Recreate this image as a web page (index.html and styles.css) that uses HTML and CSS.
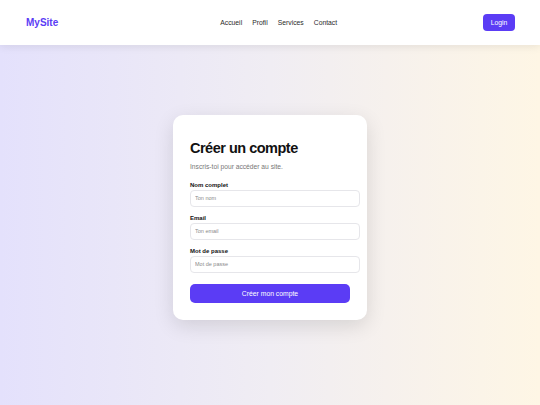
FILE: index.html
```html
<!DOCTYPE html>
<html lang="fr">
<head>
<meta charset="utf-8">
<title>MySite</title>
<link rel="stylesheet" href="styles.css">
</head>
<body>
<header class="topbar">
  <a class="logo" href="#">MySite</a>
  <nav class="nav">
    <a href="#">Accueil</a>
    <a href="#">Profil</a>
    <a href="#">Services</a>
    <a href="#">Contact</a>
  </nav>
  <button class="login">Login</button>
</header>
<main class="main">
  <form class="card">
    <h1 class="title">Créer un compte</h1>
    <p class="subtitle">Inscris-toi pour accéder au site.</p>
    <label class="label">Nom complet</label>
    <input class="field" type="text" placeholder="Ton nom">
    <label class="label">Email</label>
    <input class="field" type="email" placeholder="Ton email">
    <label class="label">Mot de passe</label>
    <input class="field" type="password" placeholder="Mot de passe">
    <button class="submit" type="button">Créer mon compte</button>
  </form>
</main>
</body>
</html>
```
FILE: styles.css
```css
* { margin: 0; }
html, body { height: 100%; }
body {
  font-family: "Liberation Sans", Arial, sans-serif;
  background: linear-gradient(to right, #e4e1fc 0%, #f0edf3 50%, #fef6e5 100%);
  color: #111;
}
.topbar {
  height: 45px;
  background: #fff;
  box-shadow: 0 2px 8px rgba(0,0,0,0.08);
  display: flex;
  align-items: center;
  padding: 0 25px 0 26px;
  box-sizing: border-box;
  position: relative;
}
.logo {
  font-size: 10px;
  font-weight: 700;
  color: #5b3cf5;
  text-decoration: none;
}
.nav {
  display: flex;
  gap: 10px;
  margin-left: 162px;
}
.nav a {
  font-size: 6.8px;
  color: #2a2a2a;
  text-decoration: none;
}
.login {
  margin-left: auto;
  background: #5b3cf5;
  color: #fff;
  border: none;
  border-radius: 4px;
  font-family: inherit;
  font-size: 6.8px;
  height: 16.5px;
  width: 32px;
  padding: 0;
}
.main {
  display: flex;
  justify-content: center;
  padding-top: 70px;
}
.card {
  width: 160px;
  padding: 17px;
  background: #fff;
  border-radius: 10px;
  box-shadow: 0 6px 20px rgba(0,0,0,0.12);
  display: flex;
  flex-direction: column;
}
.title {
  font-size: 14.5px;
  font-weight: 700;
  letter-spacing: -0.5px;
  margin-top: 7.5px;
  line-height: 16px;
}
.subtitle {
  font-size: 6.7px;
  color: #777;
  margin-top: 7.5px;
  margin-bottom: 8.5px;
  line-height: 8px;
}
.label {
  font-size: 6px;
  font-weight: 700;
  color: #111;
  line-height: 8px;
  margin-top: 1px;
  margin-bottom: 1px;
}
.field {
  width: 160px;
  padding: 4px;
  border: 1px solid #e6e6ea;
  border-radius: 4px;
  font-family: inherit;
  font-size: 5.5px;
  line-height: 7px;
  height: 7px;
  margin-bottom: 6px;
  background: #fff;
}
.field::placeholder { color: #8a8a8a; }
.submit {
  margin-top: 5px;
  width: 160px;
  height: 19.5px;
  background: #5b3cf5;
  color: #fff;
  border: none;
  border-radius: 5px;
  font-family: inherit;
  font-size: 6.8px;
  padding: 0;
}
```
